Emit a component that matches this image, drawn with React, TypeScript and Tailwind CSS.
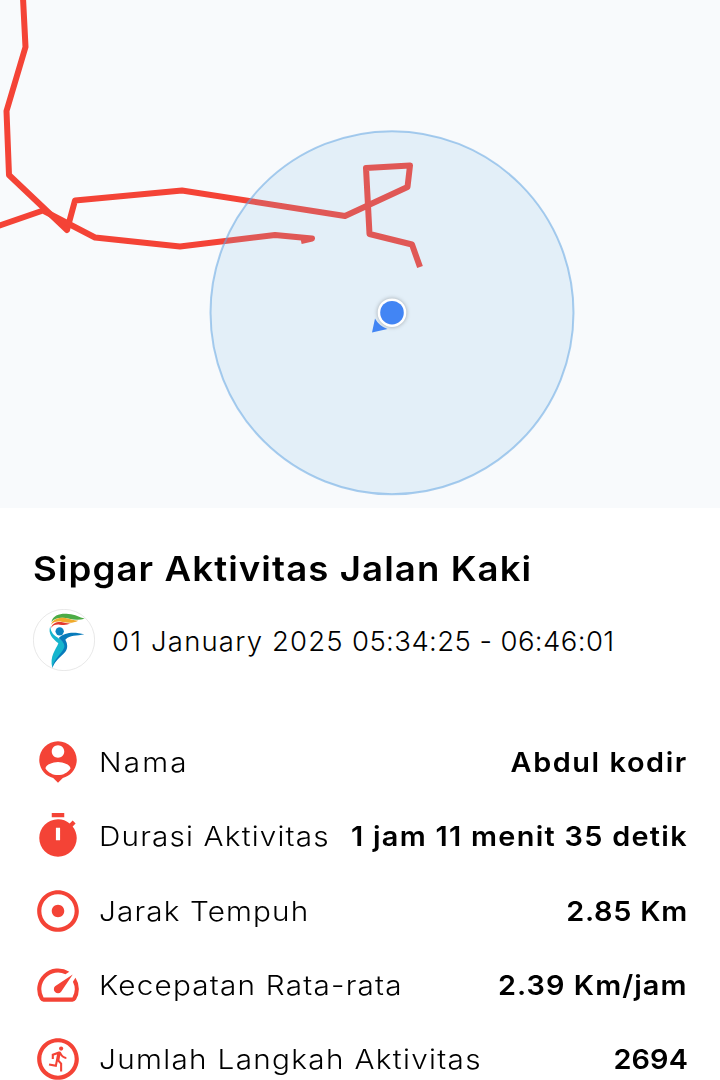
import { MdAdjust, MdOutlineRunCircle, MdSpeed } from "react-icons/md";

function PersonPinIcon() {
  return (
    <svg viewBox="0 0 24 24" className="size-[50px]" fill="currentColor">
      <path d="M12 2c-4.97 0-9 4.03-9 9 0 4.17 2.84 7.67 6.69 8.69L12 22l2.31-2.31C18.16 18.67 21 15.17 21 11c0-4.97-4.03-9-9-9zm0 2c1.66 0 3 1.34 3 3s-1.34 3-3 3-3-1.34-3-3 1.34-3 3-3zm0 14.3c-2.5 0-4.71-1.28-6-3.22.03-1.99 4-3.08 6-3.08 1.99 0 5.97 1.09 6 3.08-1.29 1.94-3.5 3.22-6 3.22z" />
    </svg>
  );
}

function TimerIcon() {
  return (
    <svg viewBox="0 0 24 24" className="size-[50px]" fill="currentColor" fillRule="evenodd">
      <path d="M15 1H9v2h6V1zm-4 13h2V8h-2v6zm8.03-6.61l1.42-1.42c-.43-.51-.9-.99-1.41-1.41l-1.42 1.42C16.07 4.74 14.12 4 12 4c-4.97 0-9 4.03-9 9s4.02 9 9 9 9-4.03 9-9c0-2.12-.74-4.07-1.97-5.61z" />
    </svg>
  );
}

const stats = [
  { label: "Nama", value: "Abdul kodir", icon: <PersonPinIcon />, labelClass: "tracking-[2px]", valueClass: "tracking-[1.5px]" },
  { label: "Durasi Aktivitas", value: "1 jam 11 menit 35 detik", icon: <TimerIcon />, labelClass: "tracking-[1.08px]", valueClass: "tracking-[1.22px]" },
  { label: "Jarak Tempuh", value: "2.85 Km", icon: <MdAdjust size={50} />, labelClass: "tracking-[1.05px]", valueClass: "tracking-[0.7px]" },
  { label: "Kecepatan Rata-rata", value: "2.39 Km/jam", icon: <MdSpeed size={50} />, labelClass: "tracking-[1.12px]", valueClass: "tracking-[1px]" },
  { label: "Jumlah Langkah Aktivitas", value: "2694", icon: <MdOutlineRunCircle size={50} />, labelClass: "tracking-[1.22px]", valueClass: "tracking-[0.1px]" },
];

/* ======================
   MAP
====================== */
function RouteMap() {
  return (
    <svg viewBox="0 0 720 508" className="block h-[508px] w-[720px] bg-[#f8fafc]">
      <g fill="none" stroke="#f44336" strokeWidth="6" strokeLinejoin="round">
        <path d="M23 -2L25.5 47L6.5 111L9 175L67 230L75 200.500L182 190.500L345 216L407.500 187L410 165.500L366 168L369.500 234L412 244.500L420 267" />
        <path d="M-2 226L43 210.500L95 237.500L180 246.500L275 235L312 238.500L301 241" />
      </g>
      <circle cx="392" cy="312.700" r="181.500" fill="#84bbe7" fillOpacity=".18" stroke="#64a5e1" strokeOpacity=".55" strokeWidth="2" />
      <path d="M372 332.500L375 318.500Q379 326 387.500 329Z" fill="#4285f4" />
      <circle cx="392" cy="312.700" r="14.300" fill="#fff" className="drop-shadow-[0_0_2px_rgba(0,0,0,0.3)]" />
      <circle cx="392" cy="312.700" r="11.800" fill="#4285f4" />
    </svg>
  );
}

function Logo() {
  return (
    <svg viewBox="39 27 186 186" className="size-[62px] shrink-0">
      <circle cx="132" cy="120" r="92" fill="#fff" stroke="#dcdcdc" strokeWidth="2" />
      <path d="M94 66C100 45 120 40 145 42C167 43 178 52 194 56C180 60 164 60 148 56C125 51 105 53 94 66Z" fill="#4cab45" />
      <path d="M93 74C98 58 112 52 132 53C148 55 160 61 175 62C157 71 144 68 128 66C110 63 101 65 93 74Z" fill="#f0aa2b" />
      <path d="M93 84C97 70 108 65 124 66C135 68 143 71 152 70C140 76 131 75 119 74C105 73 99 76 93 84Z" fill="#e33a2e" />
      <circle cx="119" cy="94" r="12.500" fill="#0b83c0" />
      <path d="M91 78C83 101 97 115 115 130C108 149 88 168 97 204C101 182 130 163 137 142C140 122 103 113 96 97C92 90 91 84 91 78Z" fill="#16b5cd" />
      <path d="M116 114C135 95 165 96 193 103C170 108 150 105 136 119C142 130 145 143 136 155C122 171 105 181 97 204C99 179 124 164 133 142C135 130 126 124 116 114Z" fill="#087bbb" />
    </svg>
  );
}

/* ======================
   PAGE
====================== */
export default function App() {
  return (
    <main className="h-[1080px] w-[720px] overflow-hidden bg-white font-['Inter',sans-serif] text-black">
      <RouteMap />
      <section className="pt-[38px] pr-[33px] pl-[33px]">
        <h1 className="h-[46px] origin-left scale-x-[1.077] text-[34px] leading-[46px] font-semibold tracking-[1px] whitespace-nowrap">
          Sipgar Aktivitas Jalan Kaki
        </h1>
        <div className="mt-[17px] flex h-[62px] items-center gap-[17px]">
          <Logo />
          <p className="pt-[3px] text-[27.5px] font-light tracking-[0.42px] whitespace-nowrap">
            <span className="tracking-[1.18px]">01 January 2025</span> 05:34:25 - 06:46:01
          </p>
        </div>
      </section>
      <ul className="mt-[54px] pr-[32px] pl-[33px]">
        {stats.map((s) => (
          <li key={s.label} className="flex h-[74.3px] items-center text-[27.5px] whitespace-nowrap">
            <span className="mr-4 shrink-0 text-[#f44336]">{s.icon}</span>
            <span className={`origin-left scale-x-[1.08] pt-px font-light ${s.labelClass}`}>{s.label}</span>
            <span className={`ml-auto origin-right scale-x-[1.05] pt-px font-semibold ${s.valueClass}`}>{s.value}</span>
          </li>
        ))}
      </ul>
    </main>
  );
}
